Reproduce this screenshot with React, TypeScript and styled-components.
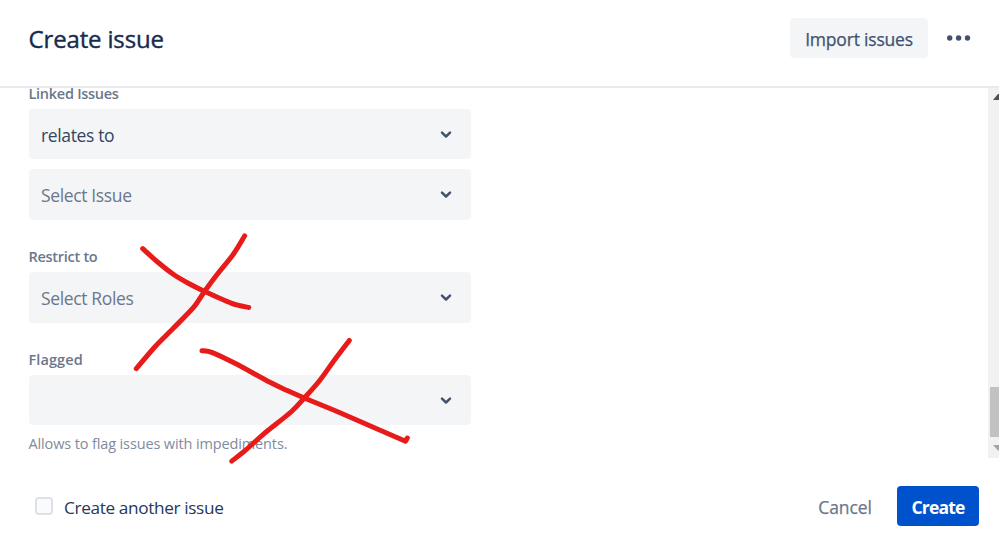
import React from "react";
import styled, { createGlobalStyle } from "styled-components";

const GlobalStyle = createGlobalStyle`
  * { box-sizing: border-box; }
  body { margin: 0; background: #fff; overflow: hidden; }
  button { border: 0; font: inherit; cursor: pointer; }
`;

const Dialog = styled.div`
  display: flex;
  flex-direction: column;
  width: 999px;
  height: 556px;
  overflow: hidden;
  position: relative;
  background: #fff;
  color: #172b4d;
  font-family: "Open Sans", "Noto Sans", sans-serif;
  font-size: 17.5px;
  white-space: nowrap;
`;

const Header = styled.header`
  display: flex;
  align-items: center;
  justify-content: space-between;
  flex: 0 0 88px;
  padding: 0 27px 10px 28px;
  border-bottom: 2px solid #e9eaee;
`;

const Title = styled.h1`
  margin: 2px 0 0 0.5px;
  font-size: 24px;
  font-weight: 500;
  letter-spacing: -0.15px;
  line-height: 32px;
  -webkit-text-stroke: 0.4px currentColor;
`;

const Actions = styled.div`
  display: flex;
  align-items: center;
`;

const Button = styled.button<{ $kind: "subtle" | "plain" | "primary"; $width: number }>`
  width: ${(p) => p.$width}px;
  height: 40px;
  padding: 2px 0 0;
  border-radius: 4px;
  line-height: 38px;
  text-align: center;
  font-weight: ${(p) => (p.$kind === "primary" ? 700 : 500)};
  letter-spacing: ${(p) => ({ subtle: "-0.2px", plain: "-0.1px", primary: "-0.8px" })[p.$kind]};
  -webkit-text-stroke: ${(p) => (p.$kind === "primary" ? "0" : "0.25px currentColor")};
  color: ${(p) => ({ subtle: "#42526e", plain: "#6b778c", primary: "#fff" })[p.$kind]};
  background: ${(p) => ({ subtle: "#f4f5f7", plain: "transparent", primary: "#0052cc" })[p.$kind]};
`;

const MoreButton = styled.button`
  display: flex;
  width: 26px;
  height: 40px;
  margin-left: 18px;
  padding: 0;
  align-items: center;
  background: none;
`;

const Body = styled.main`
  display: flex;
  flex: 0 0 370px;
  justify-content: space-between;
`;

const Form = styled.div`
  display: flex;
  flex-direction: column;
  gap: 27.4px;
  width: 442px;
  margin: -4px 0 0 28.5px;
`;

const Field = styled.section`
  display: flex;
  flex-direction: column;
`;

const Label = styled.label<{ $tracking?: number }>`
  height: 20px;
  margin-bottom: 5px;
  color: #6b778c;
  font-size: 14.5px;
  font-weight: 600;
  letter-spacing: ${(p) => p.$tracking ?? -0.28}px;
  line-height: 20px;
`;

const SelectBox = styled.div<{ $filled?: boolean }>`
  display: flex;
  align-items: center;
  justify-content: space-between;
  height: 50.4px;
  padding: 1px 18px 0 12.5px;
  border-radius: 4px;
  background: #f4f5f7;
  color: ${(p) => (p.$filled ? "#344563" : "#6b778c")};
  letter-spacing: -0.36px;

  & + & { margin-top: 10px; }
`;

const Chevron = styled.svg`
  margin: 0 0 0 auto;
`;

const Help = styled.p`
  margin: 8.6px 0 0;
  color: #7f8a9d;
  font-size: 14.5px;
  letter-spacing: -0.13px;
  line-height: 20px;
`;

const Scrollbar = styled.div`
  display: flex;
  flex-direction: column;
  align-items: flex-end;
  width: 11px;
  background: #f1f1f1;
`;

const Thumb = styled.div`
  width: 9px;
  height: 50px;
  margin-top: 285px;
  background: #c1c1c1;
`;

const Footer = styled.footer`
  display: flex;
  flex: 1;
  align-items: flex-start;
  justify-content: space-between;
  padding: 28px 20px 0 35px;
`;

const CheckLabel = styled.label`
  display: flex;
  align-items: center;
  gap: 11px;
  height: 42px;
  color: #253858;
  font-size: 17.2px;
  letter-spacing: -0.35px;
`;

const Box = styled.span`
  width: 18px;
  height: 18px;
  margin-top: -2px;
  border: 2px solid #dfe1e6;
  border-radius: 4px;
  background: #fafbfc;
`;

const Markup = styled.svg`
  position: absolute;
  inset: 0;
  pointer-events: none;
`;

type Point = [number, number];

const strokes: Point[][] = [
  [[142.7, 248.7], [157, 261.5], [173.3, 274.3], [188.3, 283.3], [204.3, 291.3], [231.7, 303.3], [248.7, 307.5]],
  [[244.7, 235.8], [233.3, 254.3], [216.7, 275], [204.3, 291.7], [193.3, 307.7], [173.3, 328.3], [155, 346.7], [136.3, 368.6]],
  [[202, 350.7], [211.7, 352.3], [235, 363.3], [270, 382.3], [286.7, 390.3], [304.3, 398], [340, 412.7], [405.5, 441.2], [407.3, 438]],
  [[349.3, 340.5], [335, 359.3], [319.3, 381], [304.3, 398], [291, 412], [263.3, 434.3], [245, 450.7], [231.8, 461.1]],
];

// Joins the sampled points with cubic curves; very short hops stay straight.
function smooth(points: Point[]) {
  let d = `M${points[0]}`;
  for (let i = 0; i < points.length - 1; i++) {
    const p0 = points[Math.max(i - 1, 0)];
    const p1 = points[i];
    const p2 = points[i + 1];
    const p3 = points[Math.min(i + 2, points.length - 1)];
    const length = Math.hypot(p2[0] - p1[0], p2[1] - p1[1]);
    const tension = length > 60 ? 0.03 : 1 / 7;
    const a = [p1[0] + (p2[0] - p0[0]) * tension, p1[1] + (p2[1] - p0[1]) * tension];
    const b = [p2[0] - (p3[0] - p1[0]) * tension, p2[1] - (p3[1] - p1[1]) * tension];
    d += length < 6 ? `L${p2}` : `C${a} ${b} ${p2}`;
  }
  return d;
}

function Select({ value, filled }: { value?: string; filled?: boolean }) {
  return (
    <SelectBox $filled={filled}>
      {value}
      <Chevron width="14" height="12" viewBox="0 0 14 12" fill="none">
        <path d="M3 3.7 L7 7.5 L11 3.7" stroke="#42526e" strokeWidth="2.5" strokeLinecap="round" strokeLinejoin="round" />
      </Chevron>
    </SelectBox>
  );
}

export default function App() {
  return (
    <Dialog>
      <GlobalStyle />
      <Header>
        <Title>Create issue</Title>
        <Actions>
          <Button $kind="subtle" $width={138}>Import issues</Button>
          <MoreButton aria-label="More actions">
            <svg width="26" height="8" viewBox="0 0 26 8" fill="#42526e">
              <circle cx="3.7" cy="4" r="2.7" />
              <circle cx="12.6" cy="4" r="2.7" />
              <circle cx="21.5" cy="4" r="2.7" />
            </svg>
          </MoreButton>
        </Actions>
      </Header>
      <Body>
        <Form>
          <Field>
            <Label>Linked Issues</Label>
            <Select value="relates to" filled />
            <Select value="Select Issue" />
          </Field>
          <Field>
            <Label>Restrict to</Label>
            <Select value="Select Roles" />
          </Field>
          <Field>
            <Label $tracking={0.1}>Flagged</Label>
            <Select />
            <Help>Allows to flag issues with impediments.</Help>
          </Field>
        </Form>
        <Scrollbar>
          <svg width="6" height="14" viewBox="0 0 6 14"><path d="M0 12 L5 6 L6 6 V12 Z" fill="#505050" /></svg>
          <Thumb />
          <svg width="6" height="20" viewBox="0 0 6 20"><path d="M0 8 H6 V13.5 L5 13.5 Z" fill="#a3a3a3" /></svg>
        </Scrollbar>
      </Body>
      <Footer>
        <CheckLabel><Box />Create another issue</CheckLabel>
        <Actions>
          <Button $kind="plain" $width={104}>Cancel</Button>
          <Button $kind="primary" $width={82}>Create</Button>
        </Actions>
      </Footer>
      <Markup width="999" height="556" viewBox="0 0 999 556" fill="none">
        {strokes.map((points, i) => (
          <path key={i} d={smooth(points)} stroke="#e81b1b" strokeWidth="5" strokeLinecap="round" strokeLinejoin="round" />
        ))}
      </Markup>
    </Dialog>
  );
}
